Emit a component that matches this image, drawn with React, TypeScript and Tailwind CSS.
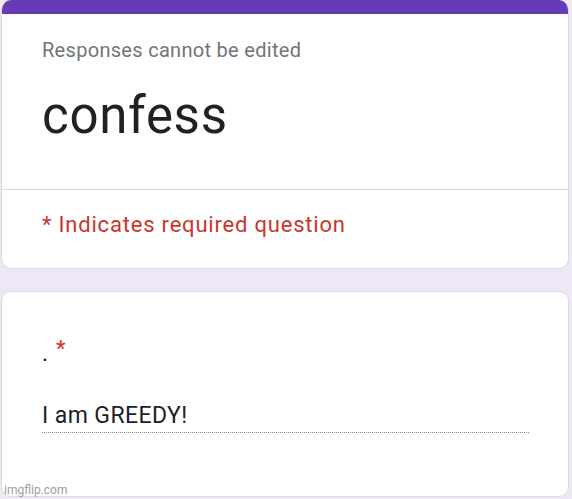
import React from "react";

const font = { fontFamily: "Roboto, 'Noto Sans', Arial, sans-serif" };

export default function App() {
  return (
    <div
      style={font}
      className="w-[572px] h-[499px] bg-[#ede7f6] pl-[1px] pr-[3px] flex flex-col gap-[22px] relative overflow-hidden"
    >
      {/* Header card */}
      <div className="h-[269px] bg-white rounded-[10px] border border-[#dadce0] border-t-0 overflow-hidden flex flex-col">
        <div className="h-[14px] bg-[#673ab7] shrink-0"></div>
        <div className="h-[176px] border-b border-[#dadce0] pl-[40px] pt-[24px]">
          <p className="text-[20px] leading-[24px] text-[#70757a] tracking-[0.3px]">
            Responses cannot be edited
          </p>
          <h1 className="text-[51px] leading-[60px] text-[#202124] tracking-[0.7px] mt-[24px]">
            confess
          </h1>
        </div>
        <div className="pl-[40px] pt-[21px]">
          <p className="text-[22px] leading-[28px] text-[#c9362c] tracking-[0.8px]">
            * Indicates required question
          </p>
        </div>
      </div>

      {/* Question card */}
      <div className="h-[206px] bg-white rounded-[10px] border border-[#dadce0] pl-[40px] pr-[40px] pt-[46px]">
        <div className="flex items-start text-[23px] leading-[28px] text-[#202124]">
          <span className="mt-[2px]">.</span>
          <span className="text-[#d93025] ml-[8px] mt-[0px] text-[22px] leading-[22px]">*</span>
        </div>
        <div className="mt-[34px] w-[487px]">
          <p className="text-[23px] leading-[28px] tracking-[0.4px] text-[#202124]">I am GREEDY!</p>
          <div className="mt-[2px] border-b border-dotted border-[#80868b]"></div>
        </div>
      </div>

      <span className="absolute left-[4px] bottom-[2px] text-[12px] leading-[14px] text-[#9e9e9e]">
        imgflip.com
      </span>
    </div>
  );
}
